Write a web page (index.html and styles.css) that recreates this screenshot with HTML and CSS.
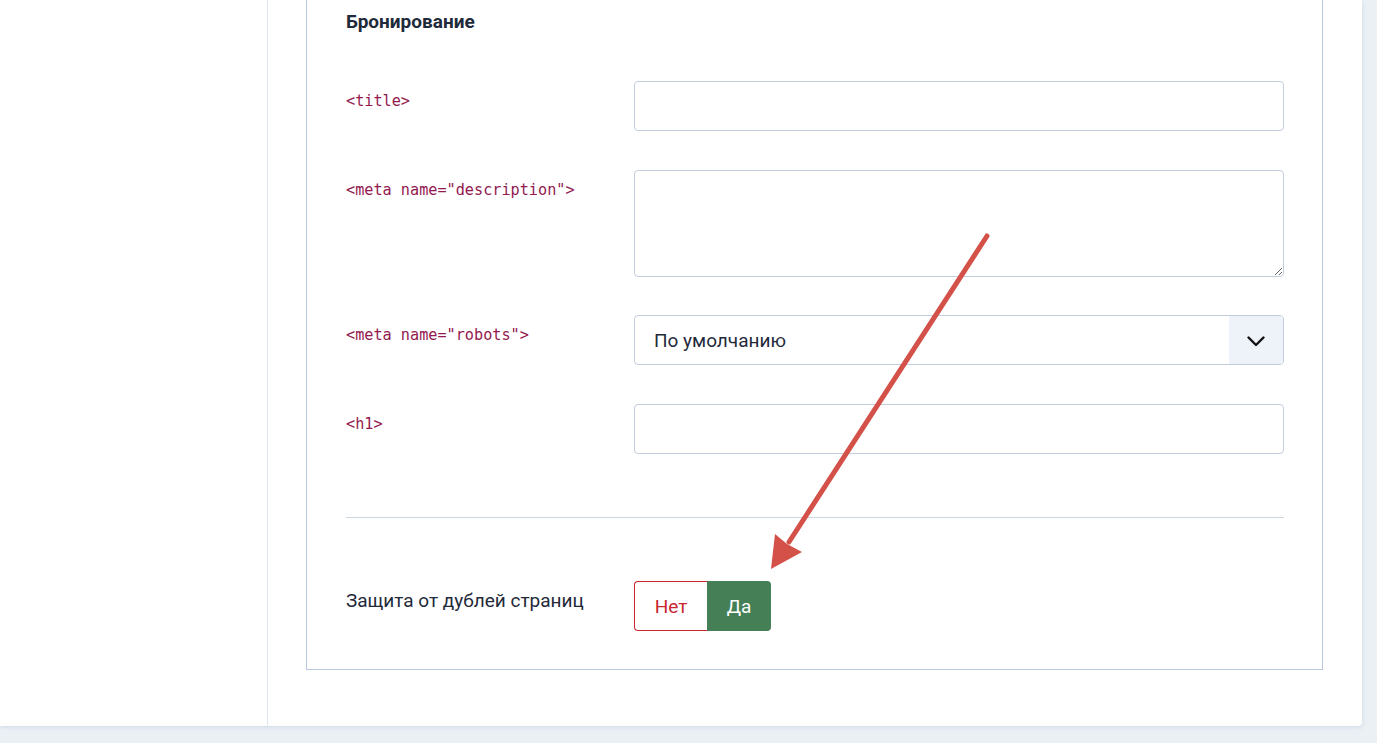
FILE: index.html
```html
<!DOCTYPE html>
<html lang="ru">
<head>
<meta charset="utf-8">
<title>Бронирование</title>
<link rel="stylesheet" href="styles.css">
</head>
<body>
<div class="page">
  <aside class="sidebar"></aside>
  <main class="content">
    <section class="fieldset">
      <h3 class="legend">Бронирование</h3>
      <div class="row">
        <label class="label code">&lt;title&gt;</label>
        <div class="control"><input class="input" type="text"></div>
      </div>
      <div class="row">
        <label class="label code">&lt;meta name="description"&gt;</label>
        <div class="control"><textarea class="input textarea"></textarea></div>
      </div>
      <div class="row">
        <label class="label code">&lt;meta name="robots"&gt;</label>
        <div class="control">
          <div class="select">
            <span class="select-value">По умолчанию</span>
            <span class="select-btn">
              <svg width="20" height="12" viewBox="0 0 20 12"><path d="M2.5 2.5l7.5 7.5 7.5-7.5" fill="none" stroke="#111" stroke-width="2.4" stroke-linecap="round" stroke-linejoin="round"/></svg>
            </span>
          </div>
        </div>
      </div>
      <div class="row">
        <label class="label code">&lt;h1&gt;</label>
        <div class="control"><input class="input" type="text"></div>
      </div>
      <hr class="divider">
      <div class="row row-toggle">
        <label class="label text">Защита от дублей страниц</label>
        <div class="control">
          <div class="toggle">
            <span class="opt opt-no">Нет</span>
            <span class="opt opt-yes">Да</span>
          </div>
        </div>
      </div>
    </section>
  </main>
</div>
<svg class="arrow" width="1377" height="743" viewBox="0 0 1377 743">
  <line x1="987" y1="236" x2="789" y2="542" stroke="#d4514a" stroke-width="5" stroke-linecap="round"/>
  <polygon points="771,569 775,534 787,544 802,552" fill="#d4514a"/>
</svg>
</body>
</html>
```
FILE: styles.css
```css
html, body {
  margin: 0;
  padding: 0;
}
body {
  background: #ebf0f5;
  width: 1377px;
  height: 743px;
  overflow: hidden;
  font-family: Roboto, "Liberation Sans", sans-serif;
  position: relative;
}
.page {
  width: 1362px;
  height: 726px;
  background: #fff;
  display: flex;
  border-bottom-right-radius: 4px;
  box-shadow: 0 1px 4px rgba(150, 170, 195, 0.35);
}
.sidebar {
  width: 267px;
  flex: none;
  border-right: 1px solid #dfe5ec;
}
.content {
  flex: 1;
  padding-left: 38px;
}
.fieldset {
  border: 1px solid #b9c8df;
  border-top: none;
  padding: 0 39px 38px 39px;
  box-sizing: content-box;
  width: 937px;
}
.legend {
  margin: 0;
  padding-top: 9px;
  font-size: 19px;
  font-weight: 700;
  color: #1f2a3a;
  line-height: 26px;
  height: 72px;
}
.row {
  display: flex;
  margin-bottom: 39px;
}
.label {
  width: 288px;
  flex: none;
  padding-top: 9px;
  line-height: 22px;
}
.code {
  font-family: "DejaVu Sans Mono", "Liberation Mono", monospace;
  font-size: 15.2px;
  color: #921a4f;
}
.text {
  font-size: 19px;
  color: #1f2a3a;
  padding-top: 9px;
}
.control {
  width: 650px;
  flex: none;
}
.input {
  display: block;
  width: 650px;
  height: 50px;
  box-sizing: border-box;
  border: 1px solid #c2cedd;
  border-radius: 4px;
  background: #fff;
  margin: 0;
  padding: 0 20px;
  font: inherit;
}
.textarea {
  height: 107px;
  margin-bottom: -1px;
  resize: vertical;
}
.select {
  display: flex;
  height: 50px;
  box-sizing: border-box;
  border: 1px solid #c2cedd;
  border-radius: 4px;
  overflow: hidden;
}
.select-value {
  flex: 1;
  padding-left: 19px;
  line-height: 49px;
  font-size: 19px;
  color: #1f2a3a;
}
.select-btn {
  width: 54px;
  background: #eef3fa;
  display: flex;
  align-items: center;
  justify-content: center;
  padding-top: 1px;
}
.divider {
  margin: 63px 0 0 0;
  border: none;
  border-top: 1px solid #ccd6e1;
  width: 938px;
  height: 0;
}
.row-toggle {
  margin-top: 63px;
  margin-bottom: 0;
}
.toggle {
  display: inline-flex;
  height: 50px;
}
.opt {
  display: flex;
  align-items: center;
  justify-content: center;
  font-size: 19px;
  box-sizing: border-box;
}
.opt-no {
  width: 73px;
  border: 1px solid #c8282e;
  border-right: none;
  border-radius: 4px 0 0 4px;
  color: #c8282e;
}
.opt-yes {
  width: 64px;
  background: #457f56;
  color: #fff;
  border-radius: 0 4px 4px 0;
}
.arrow {
  position: absolute;
  left: 0;
  top: 0;
  pointer-events: none;
}
```
